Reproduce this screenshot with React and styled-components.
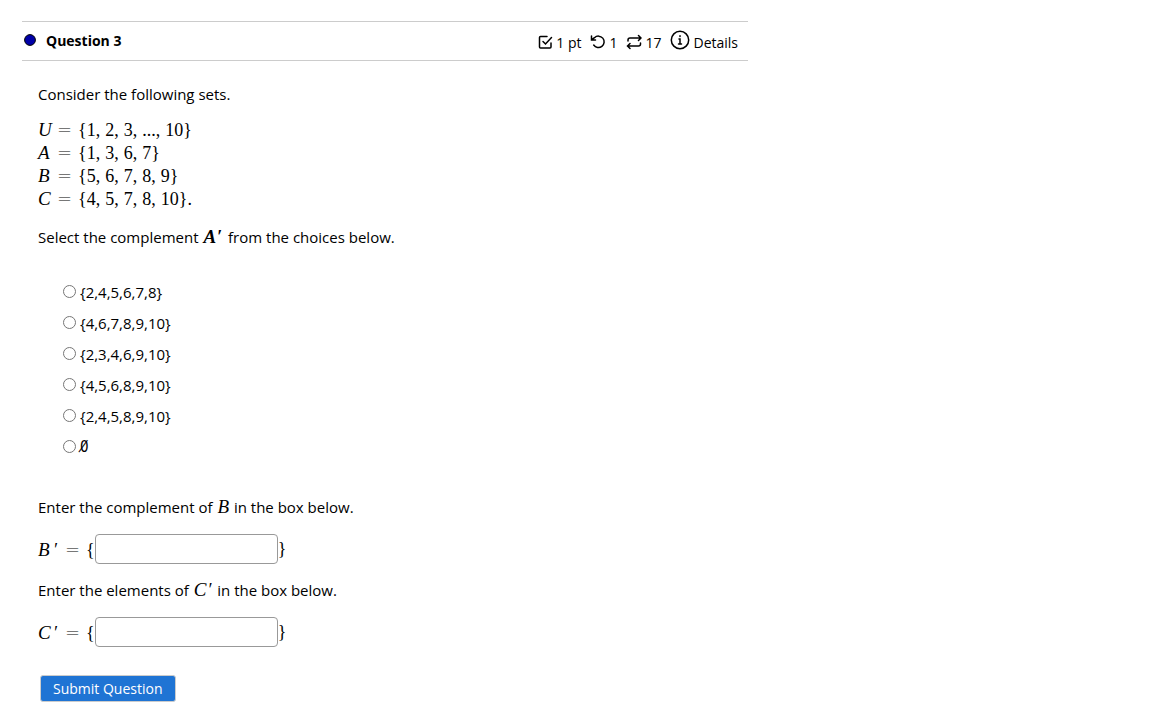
import React, { useState } from 'react';
import styled, { createGlobalStyle } from 'styled-components';

const GlobalStyle = createGlobalStyle`
  body {
    margin: 0;
    background: #fff;
    color: #000;
    font-family: "Open Sans", "Noto Sans", sans-serif;
    font-size: 15px;
    line-height: 23px;
  }
`;

const Page = styled.main`
  max-width: 726px;
  padding: 21px 22px 0;
`;

const Header = styled.header`
  display: flex;
  align-items: center;
  justify-content: space-between;
  height: 38px;
  padding: 0 10px 0 2px;
  border-top: 1px solid #ccc;
  border-bottom: 1px solid #ccc;
`;

const Title = styled.h2`
  display: flex;
  align-items: center;
  gap: 10px;
  margin: 0;
  padding-bottom: 2px;
  font-size: 14px;
  font-weight: 700;
`;

const Dot = styled.svg`
  width: 12px;
  height: 12px;
`;

const Meta = styled.div`
  display: flex;
  align-items: center;
  gap: 9px;
  font-size: 14px;
`;

const MetaItem = styled.span`
  display: flex;
  align-items: center;
  gap: 3px;
  padding-top: 3px;
`;

const DetailsButton = styled.button`
  display: flex;
  align-items: center;
  gap: 3px;
  padding: 0;
  border: 0;
  background: none;
  color: inherit;
  font: inherit;
  cursor: pointer;

  span {
    padding-top: 3px;
  }
`;

const Icon = styled.svg`
  width: ${(props) => props.$size || 16}px;
  height: ${(props) => props.$size || 16}px;
  margin-bottom: 2px;
  fill: none;
  stroke: #000;
  stroke-width: 1.5;
  stroke-linecap: round;
`;

const Body = styled.form`
  padding: 22px 16px;
`;

const Text = styled.p`
  margin: 0 0 13px;
`;

const SetList = styled.div`
  margin-bottom: 15px;
`;

const SetRow = styled.div`
  height: 23px;
`;

const MathText = styled.span`
  margin: 0 ${(props) => (props.$inline ? 1 : 0)}px;
  font-family: "Liberation Serif", serif;
  font-size: 18px;
  font-weight: ${(props) => (props.$bold ? 700 : 400)};
  line-height: 1;
`;

const Variable = styled.i`
  display: inline-block;
  min-width: ${(props) => (props.$inline ? 0 : 14)}px;
  font-size: 19px;
  line-height: 1;
`;

const Prime = styled.i`
  margin: 0 1px;
`;

const Equals = styled.span`
  margin: 0 6px 0 5px;
  font-family: "DejaVu Sans", sans-serif;
  font-weight: 200;
  line-height: 1;

  ${Prime} + & {
    margin-left: 7px;
  }
`;

const Comma = styled.span`
  margin-right: 5px;
`;

const EmptySet = styled.span`
  font-family: "DejaVu Sans Condensed", "DejaVu Sans", sans-serif;
  font-size: 15px;
`;

const Choices = styled.ul`
  margin: 0 0 29px;
  padding: 19px 0 0 24px;
  list-style: none;
`;

const Choice = styled.li`
  height: 31px;

  label {
    display: flex;
    align-items: center;
    gap: 4px;
    width: max-content;
    min-height: 23px;
  }

  input {
    width: 13px;
    height: 13px;
    margin: 0 0 2px 1px;
  }
`;

const AnswerRow = styled.div`
  display: flex;
  align-items: center;
  margin: 15px 0;
`;

const AnswerInput = styled.input`
  box-sizing: border-box;
  width: 183px;
  height: 30px;
  padding: 4px 6px;
  border: 1px solid #999;
  border-radius: 4px;
  font: inherit;
`;

const SubmitButton = styled.button`
  height: 27px;
  margin: 13px 2px 0;
  padding: 0 12px;
  border: 1px solid #ccc;
  border-radius: 3px;
  background: #1f74d4;
  color: #fff;
  font: inherit;
  font-size: 14px;
  cursor: pointer;
`;

const sets = [
  { name: 'U', items: ['1', '2', '3', '...', '10'] },
  { name: 'A', items: ['1', '3', '6', '7'] },
  { name: 'B', items: ['5', '6', '7', '8', '9'] },
  { name: 'C', items: ['4', '5', '7', '8', '10'], end: '.' },
];

// zero with a long stroke, the narrow form of the empty set sign
const EMPTY_SET = '0\u0338';

const choices = [
  '{2,4,5,6,7,8}',
  '{4,6,7,8,9,10}',
  '{2,3,4,6,9,10}',
  '{4,5,6,8,9,10}',
  '{2,4,5,8,9,10}',
  EMPTY_SET,
];

function SetLine({ name, items, end }) {
  return (
    <SetRow>
      <MathText>
        <Variable>{name}</Variable>
        <Equals>=</Equals>
        {'{'}
        {items.map((item, i) => (
          <React.Fragment key={item}>
            {item}
            {i < items.length - 1 && <Comma>,</Comma>}
          </React.Fragment>
        ))}
        {'}'}
        {end}
      </MathText>
    </SetRow>
  );
}

function Answer({ name }) {
  const id = `answer-${name}`;

  return (
    <AnswerRow>
      <MathText as="label" htmlFor={id}>
        <Variable>{name}</Variable>
        <Prime>′</Prime>
        <Equals>=</Equals>
        {'{'}
      </MathText>
      <AnswerInput id={id} type="text" />
      <MathText>{'}'}</MathText>
    </AnswerRow>
  );
}

function App() {
  const [choice, setChoice] = useState(null);

  return (
    <>
      <GlobalStyle />
      <Page>
        <Header>
          <Title>
            <Dot viewBox="0 0 12 12" aria-hidden="true">
              <circle cx="6" cy="6" r="5.4" fill="#0000a8" stroke="#000" />
            </Dot>
            Question 3
          </Title>
          <Meta>
            <MetaItem>
              <Icon viewBox="0 0 16 16" aria-hidden="true">
                <path d="M10 2.500H3.500Q2.500 2.500 2.500 3.500V13Q2.500 14 3.500 14H13Q14 14 14 13V9M6 7.500l2.500 2.500L14.500 3.500" />
              </Icon>
              1 pt
            </MetaItem>
            <MetaItem>
              <Icon viewBox="0 0 16 16" aria-hidden="true">
                <path d="M1.500 2V6H5.500M1.800 5.700L4.500 3.700A5.700 5.700 0 1 1 3.700 11" />
              </Icon>
              1
            </MetaItem>
            <MetaItem>
              <Icon viewBox="0 0 16 16" aria-hidden="true">
                <path d="M12.500 1.500l2.500 2.500-2.500 2.500M2 7V6Q2 4 4 4H15M4 9.500l-2.500 2.500 2.500 2.500M14.500 9v1Q14.500 12 12.500 12H2" />
              </Icon>
              17
            </MetaItem>
            <DetailsButton type="button">
              <Icon $size={20} viewBox="0 0 20 20" aria-hidden="true">
                <circle cx="10" cy="10" r="8.700" />
                <path d="M10 5.800v.6M9 9H10v5M8.500 14h3" />
              </Icon>
              <span>Details</span>
            </DetailsButton>
          </Meta>
        </Header>

        <Body onSubmit={(e) => e.preventDefault()}>
          <Text>Consider the following sets.</Text>
          <SetList>
            {sets.map((set) => (
              <SetLine key={set.name} {...set} />
            ))}
          </SetList>
          <Text>
            Select the complement{' '}
            <MathText $bold $inline>
              <Variable $inline>A</Variable>
              <Prime>′</Prime>
            </MathText>{' '}
            from the choices below.
          </Text>

          <Choices>
            {choices.map((label) => (
              <Choice key={label}>
                <label>
                  <input
                    type="radio"
                    name="complement"
                    checked={choice === label}
                    onChange={() => setChoice(label)}
                  />
                  {label === EMPTY_SET ? <EmptySet>{label}</EmptySet> : label}
                </label>
              </Choice>
            ))}
          </Choices>

          <Text>
            Enter the complement of{' '}
            <MathText $inline>
              <Variable $inline>B</Variable>
            </MathText>{' '}
            in the box below.
          </Text>
          <Answer name="B" />
          <Text>
            Enter the elements of{' '}
            <MathText $inline>
              <Variable $inline>C</Variable>
              <Prime>′</Prime>
            </MathText>{' '}
            in the box below.
          </Text>
          <Answer name="C" />

          <SubmitButton type="submit">Submit Question</SubmitButton>
        </Body>
      </Page>
    </>
  );
}

export default App;
